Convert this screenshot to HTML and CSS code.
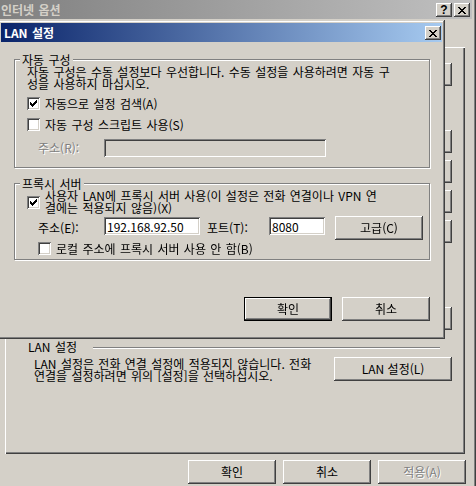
FILE: index.html
```html
<!DOCTYPE html>
<html lang="ko">
<head>
    <meta charset="UTF-8">
    <meta name="viewport" content="width=device-width, initial-scale=1.0">
    <title>인터넷 옵션 - LAN 설정</title>
    <link rel="stylesheet" href="styles.css">
</head>
<body>
    <!-- background window: Internet Options, connections tab -->
    <div class="window">
        <div class="titlebar inactive">
            <span class="title">인터넷 옵션</span>
            <button class="caption-btn help">?</button>
            <button class="caption-btn close">
                <svg width="8" height="7" viewBox="0 0 8 7"><path d="M0 0h2v1h-2zM6 0h2v1h-2zM1 1h2v1h-2zM5 1h2v1h-2zM2 2h4v1h-4zM3 3h2v1h-2zM2 4h4v1h-4zM1 5h2v1h-2zM5 5h2v1h-2zM0 6h2v1h-2zM6 6h2v1h-2z"/></svg>
            </button>
        </div>
        <div class="tab-page">
            <div class="side-buttons" aria-hidden="true">
                <button class="btn side"></button>
                <button class="btn side gap-md"></button>
                <button class="btn side"></button>
                <button class="btn side"></button>
                <button class="btn side"></button>
                <button class="btn side gap-lg"></button>
            </div>
            <div class="lan-section">
                <div class="section-heading">
                    <span>LAN 설정</span>
                    <span class="rule"></span>
                </div>
                <div class="lan-row">
                    <p class="lan-note">LAN 설정은 전화 연결 설정에 적용되지 않습니다. 전화<br>연결을 설정하려면 위의 [설정]을 선택하십시오.</p>
                    <button class="btn lan-btn">LAN 설정(L)</button>
                </div>
            </div>
        </div>
        <div class="window-actions">
            <button class="btn">확인</button>
            <button class="btn">취소</button>
            <button class="btn disabled">적용(A)</button>
        </div>

        <!-- LAN settings dialog on top -->
        <div class="dialog">
            <div class="titlebar active">
                <span class="title">LAN 설정</span>
                <button class="caption-btn close">
                    <svg width="8" height="7" viewBox="0 0 8 7"><path d="M0 0h2v1h-2zM6 0h2v1h-2zM1 1h2v1h-2zM5 1h2v1h-2zM2 2h4v1h-4zM3 3h2v1h-2zM2 4h4v1h-4zM1 5h2v1h-2zM5 5h2v1h-2zM0 6h2v1h-2zM6 6h2v1h-2z"/></svg>
                </button>
            </div>
            <div class="dialog-body">
                <fieldset class="group">
                    <legend>자동 구성</legend>
                    <p class="note">자동 구성은 수동 설정보다 우선합니다. 수동 설정을 사용하려면 자동 구<br>성을 사용하지 마십시오.</p>
                    <label class="check-row first">
                        <span class="checkbox"><svg width="13" height="13" viewBox="0 0 13 13"><path d="M9 3h1v1h-1zM8 4h2v1h-2zM3 5h1v1h-1zM7 5h3v1h-3zM3 6h2v1h-2zM6 6h3v1h-3zM3 7h5v1h-5zM4 8h3v1h-3zM5 9h1v1h-1z"/></svg></span>
                        자동으로 설정 검색(A)
                    </label>
                    <label class="check-row">
                        <span class="checkbox"></span>
                        자동 구성 스크립트 사용(S)
                    </label>
                    <div class="field-row">
                        <span class="field-label disabled">주소(R):</span>
                        <input class="textbox script-url" type="text" disabled>
                    </div>
                </fieldset>

                <fieldset class="group proxy">
                    <legend>프록시 서버</legend>
                    <label class="check-row two-line">
                        <span class="checkbox"><svg width="13" height="13" viewBox="0 0 13 13"><path d="M9 3h1v1h-1zM8 4h2v1h-2zM3 5h1v1h-1zM7 5h3v1h-3zM3 6h2v1h-2zM6 6h3v1h-3zM3 7h5v1h-5zM4 8h3v1h-3zM5 9h1v1h-1z"/></svg></span>
                        <span>사용자 LAN에 프록시 서버 사용(이 설정은 전화 연결이나 VPN 연<br>결에는 적용되지 않음)(X)</span>
                    </label>
                    <div class="field-row proxy-row">
                        <span class="field-label">주소(E):</span>
                        <input class="textbox address" type="text" value="192.168.92.50">
                        <span class="field-label port-label">포트(T):</span>
                        <input class="textbox port" type="text" value="8080" autofocus>
                        <button class="btn advanced">고급(C)</button>
                    </div>
                    <label class="check-row bypass">
                        <span class="checkbox"></span>
                        로컬 주소에 프록시 서버 사용 안 함(B)
                    </label>
                </fieldset>

                <div class="dialog-actions">
                    <button class="btn default">확인</button>
                    <button class="btn">취소</button>
                </div>
            </div>
        </div>
    </div>
</body>
</html>
```

FILE: styles.css
```css
body {
    margin: 0;
    width: 476px;
    height: 486px;
    overflow: hidden;
    font-family: "Noto Sans CJK KR", "Noto Sans", sans-serif;
    font-size: 12px;
    line-height: 12px;
    word-spacing: 1px;
    color: #000;
    background-color: #d4d0c8;
}
p {
    margin: 0;
}
button, input {
    font: inherit;
    color: inherit;
    margin: 0;
}

/* classic 3D button */
.btn {
    width: 88px;
    height: 24px;
    padding: 0;
    border: none;
    background-color: #d4d0c8;
    box-shadow: inset -1px -1px #404040, inset 1px 1px #fff, inset -2px -2px #808080, inset 2px 2px #d4d0c8;
    flex-shrink: 0;
}
.btn.default {
    box-shadow: inset 0 0 0 1px #000, inset -2px -2px #404040, inset 2px 2px #fff, inset -3px -3px #808080;
}
.btn.disabled, .disabled {
    color: #808080;
    text-shadow: 1px 1px 0 #fff;
}

/* background window */
.window {
    position: relative;
    width: 476px;
    height: 486px;
    background-color: #d4d0c8;
    box-shadow: inset -1px 0 #404040, inset -2px 0 #808080;
}
.titlebar {
    display: flex;
    align-items: center;
    height: 19px;
    box-sizing: border-box;
}
.titlebar .title {
    flex: 1;
    font-weight: bold;
    white-space: nowrap;
}
.titlebar.inactive {
    width: 472px;
    padding: 0 2px 0 1px;
    background: linear-gradient(to right, #808080, #c0c0c0);
    color: #d4d0c8;
}
.titlebar.active {
    padding: 0 1px 0 3px;
    background: linear-gradient(to right, #0a246a, #a6caf0);
    color: #fff;
}
.caption-btn {
    width: 16px;
    height: 14px;
    padding: 0;
    border: none;
    display: flex;
    align-items: center;
    justify-content: center;
    background-color: #d4d0c8;
    box-shadow: inset -1px -1px #404040, inset 1px 1px #fff, inset -2px -2px #808080, inset 2px 2px #d4d0c8;
    color: #000;
}
.caption-btn + .caption-btn {
    margin-left: 2px;
}
.caption-btn.help {
    font-family: "Liberation Sans", Arial, sans-serif;
    font-weight: bold;
    font-size: 12px;
    line-height: 14px;
}
.caption-btn svg {
    display: block;
    fill: #000;
    shape-rendering: crispEdges;
    margin-top: 1px;
}

.tab-page {
    display: flex;
    flex-direction: column;
    width: 460px;
    height: 407px;
    margin: 28px 0 0 5px;
    padding-right: 13px;
    box-sizing: border-box;
    box-shadow: inset 1px 1px #fff, inset -1px -1px #404040, inset -2px -2px #808080;
}
.side-buttons {
    display: flex;
    flex-direction: column;
    align-items: flex-end;
    padding-top: 16px;
}
.btn.side {
    height: 23px;
    margin-top: 7px;
}
.btn.side:first-child {
    margin-top: 0;
}
.btn.side.gap-md {
    margin-top: 44px;
}
.btn.side.gap-lg {
    margin-top: 64px;
}

.lan-section {
    margin: 11px 0 0 23px;
}
.section-heading {
    display: flex;
    align-items: center;
    margin-right: 12px;
    white-space: nowrap;
}
.section-heading .rule {
    flex: 1;
    height: 0;
    margin: 2px 0 0 16px;
    border-top: 1px solid #808080;
    border-bottom: 1px solid #fff;
}
.lan-row {
    display: flex;
    justify-content: space-between;
    margin-top: 4px;
}
.lan-note {
    margin: 1px 0 0 6px;
    white-space: nowrap;
}
.btn.lan-btn {
    width: 118px;
}

.window-actions {
    display: flex;
    justify-content: flex-end;
    gap: 7px;
    margin-top: 6px;
    padding-right: 10px;
}

/* LAN settings dialog */
.dialog {
    position: absolute;
    left: -2px;
    top: 20px;
    width: 447px;
    height: 319px;
    padding: 3px;
    box-sizing: border-box;
    background-color: #d4d0c8;
    box-shadow: inset -1px -1px #404040, inset 1px 1px #d4d0c8, inset -2px -2px #808080, inset 2px 2px #fff;
}
.dialog-body {
    padding: 11px 12px 0 13px;
}
.group {
    margin: 0;
    padding: 0 0 10px 12px;
    min-width: 0;
    border: 1px solid #808080;
    box-shadow: inset 1px 1px #fff, 1px 1px #fff;
}
.group legend {
    margin-left: -7px;
    padding: 0 2px;
    line-height: 13px;
    background-color: #d4d0c8;
}
.group.proxy {
    margin-top: 9px;
    padding-bottom: 4px;
}
.note {
    white-space: nowrap;
}
.check-row {
    display: flex;
    align-items: center;
    height: 13px;
    margin-top: 8px;
    white-space: nowrap;
}
.check-row.first {
    margin-top: 7px;
}
.check-row.two-line {
    height: auto;
    margin-top: 0;
}
.check-row.bypass {
    margin: 2px 0 0 11px;
}
.checkbox {
    width: 13px;
    height: 13px;
    margin-right: 5px;
    flex-shrink: 0;
    background-color: #fff;
    box-shadow: inset 1px 1px #808080, inset -1px -1px #fff, inset 2px 2px #404040, inset -2px -2px #d4d0c8;
}
.checkbox svg {
    display: block;
    fill: #000;
    shape-rendering: crispEdges;
}
.field-row {
    display: flex;
    align-items: center;
    margin: 8px 0 0 11px;
    white-space: nowrap;
}
.field-row.proxy-row {
    align-items: flex-start;
    margin-top: 2px;
}
.field-label {
    width: 66px;
    flex-shrink: 0;
}
.proxy-row .field-label {
    margin-top: 6px;
}
.field-label.port-label {
    width: 62px;
    margin-left: 7px;
}
.textbox {
    height: 18px;
    padding: 0 1px;
    border: none;
    box-sizing: border-box;
    background-color: #fff;
    box-shadow: inset 1px 1px #808080, inset -1px -1px #fff, inset 2px 2px #404040, inset -2px -2px #d4d0c8;
    padding-left: 3px;
    outline: none;
    caret-color: #000;
    word-spacing: 0;
}
.textbox:disabled {
    background-color: #d4d0c8;
}
.textbox.script-url {
    width: 222px;
}
.proxy-row .textbox {
    margin-top: 1px;
}
.textbox.address {
    width: 96px;
}
.textbox.port {
    width: 56px;
}
.btn.advanced {
    margin-left: 10px;
}
.dialog-actions {
    display: flex;
    justify-content: flex-end;
    gap: 10px;
    margin-top: 37px;
}
```
